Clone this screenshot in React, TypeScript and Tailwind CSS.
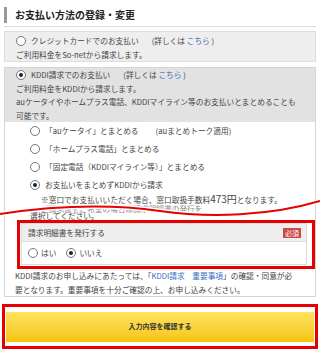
const font = { fontFamily: '"Noto Sans CJK JP", "Noto Sans", sans-serif' };

function Radio({ checked = false }: { checked?: boolean }) {
  return (
    <span className="inline-flex h-[10px] w-[10px] shrink-0 items-center justify-center rounded-full border border-[#777] bg-white">
      {checked && <span className="h-[4px] w-[4px] rounded-full bg-[#222]" />}
    </span>
  );
}

const options = [
  { label: "「auケータイ」とまとめる", note: "(auまとめトーク適用)" },
  { label: "「ホームプラス電話」とまとめる" },
  { label: "「固定電話（KDDIマイライン等）」とまとめる" },
];

export default function App() {
  return (
    <div
      className="relative h-[350px] w-[320px] overflow-hidden whitespace-nowrap bg-white text-[7.7px] leading-[13.5px] text-[#444]"
      style={font}
    >
      <div className="mx-[4px] mt-[7px] flex items-center border-b border-[#ddd] pb-[3px]">
        <span className="h-[16px] border-l-[3px] border-[#999]" />
        <h2 className="ml-[8px] text-[10px] font-bold leading-[14px] text-[#222]">お支払い方法の登録・変更</h2>
      </div>

      <div className="mx-[4px] mt-[4px] border border-[#ddd] bg-[#eeeeee] px-[11px] pt-[2px]">
        <div className="flex items-center gap-[5px]">
          <Radio />
          <span>クレジットカードでのお支払い</span>
          <span className="ml-[8px]">
            (詳しくは <span className="text-[#3a6fc4]">こちら</span> )
          </span>
        </div>
        <p>ご利用料金をSo-netから請求します。</p>
      </div>

      <div className="mx-[4px] mt-[5px] border border-[#d4d4d4]">
        <div className="bg-[#e2e2e2] px-[11px]">
          <div className="flex items-center gap-[5px]">
            <Radio checked />
            <span>KDDI請求でのお支払い</span>
            <span className="ml-[8px]">
              (詳しくは <span className="text-[#3a6fc4]">こちら</span> )
            </span>
          </div>
          <p>ご利用料金をKDDIから請求します。</p>
          <p>
            auケータイやホームプラス電話、KDDIマイライン等のお支払いとまとめることも
            <br />
            可能です。
          </p>
        </div>

        <div className="pl-[25px]">
          {options.map((o) => (
            <div key={o.label} className="flex h-[18px] items-center gap-[5px]">
              <Radio />
              <span>{o.label}</span>
              {o.note && <span className="ml-[12px]">{o.note}</span>}
            </div>
          ))}
          <div className="flex h-[18px] items-center gap-[5px]">
            <Radio checked />
            <span>お支払いをまとめずKDDIから請求</span>
          </div>
          <p className="pl-[11px] leading-[10px]">
            ※窓口でお支払いいただく場合、窓口取扱手数料<span className="text-[10px]">473円</span>となります。
          </p>
          <p className="pl-[11px] leading-[7px] text-[#888]">ご請求書をご希望の場合は請求明細書の発行を</p>
          <p className="leading-[8px]">選択してください。</p>
        </div>

        <div className="relative ml-[12px] mr-[0px] border-[3px] border-[#e60000] bg-white pb-[1px] pl-[1px] pr-[5px]">
          <div className="border border-[#ddd]">
            <div className="flex h-[18px] items-center justify-between border-b border-[#ddd] bg-[#eeeeee] pl-[6px] pr-[5px]">
              <span>請求明細書を発行する</span>
              <span className="bg-[#c9484a] px-[2px] text-[7px] leading-[10px] text-white">必須</span>
            </div>
            <div className="flex h-[22px] items-center gap-[10px] pl-[6px]">
              <span className="flex items-center gap-[3px]">
                <Radio />
                はい
              </span>
              <span className="flex items-center gap-[3px]">
                <Radio checked />
                いいえ
              </span>
            </div>
          </div>
        </div>

        <div className="px-[10px]">
          <p>
            KDDI請求のお申し込みにあたっては、「<span className="text-[#3a6fc4]">KDDI請求　重要事項</span>
            」の確認・同意が必
            <br />
            要となります。重要事項を十分ご確認の上、お申し込みください。
          </p>
        </div>
      </div>

      <div className="mx-[2px] mt-[7px] border-[3px] border-[#e60000] px-[1px] pt-[5px] pb-[4px]">
        <button
          type="button"
          className="flex h-[30px] w-full items-center justify-center bg-gradient-to-b from-[#ffe45c] to-[#f6c400] text-[7px] font-bold text-[#333]"
        >
          入力内容を確認する
        </button>
      </div>

      <svg className="pointer-events-none absolute left-0 top-0" width="320" height="350">
        <path d="M0,214 C60,205 110,204 160,211 S270,216 320,201" fill="none" stroke="#fff" strokeWidth="5" />
        <path d="M0,214 C60,205 110,204 160,211 S270,216 320,201" fill="none" stroke="#e60000" strokeWidth="2" />
      </svg>
    </div>
  );
}
